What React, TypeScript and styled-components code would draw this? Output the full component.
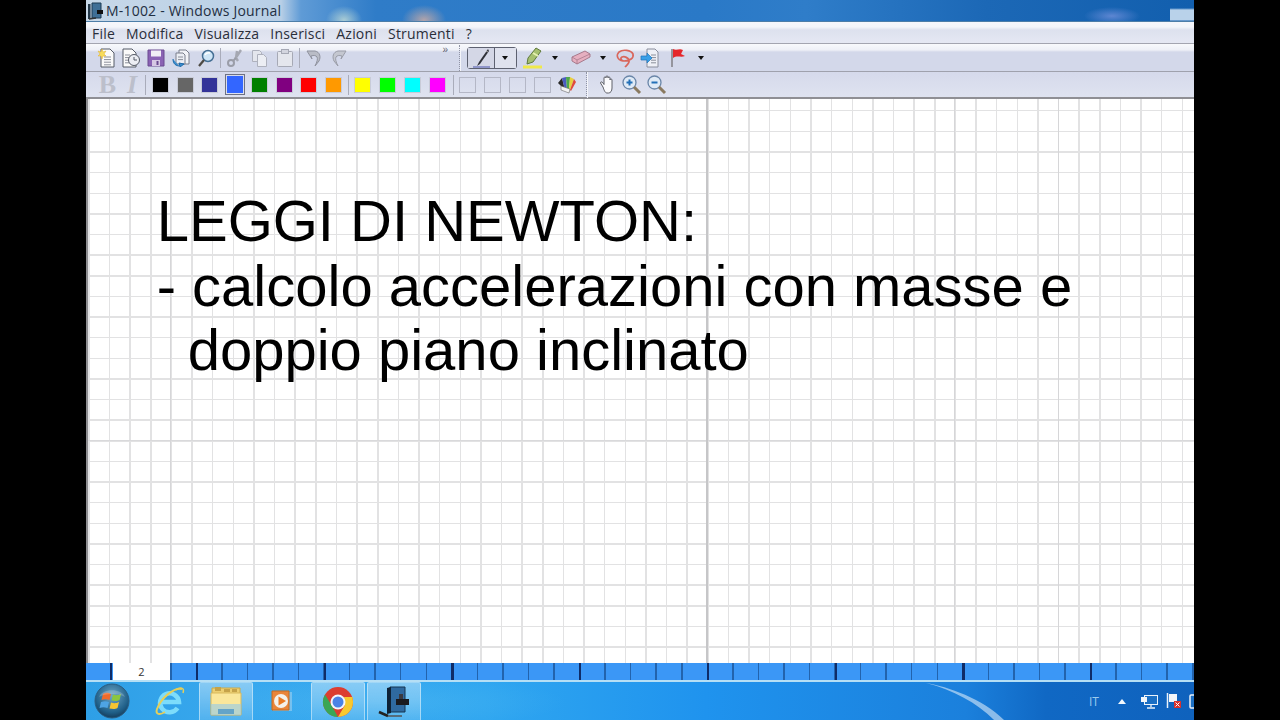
import React from "react";
import styled, { createGlobalStyle } from "styled-components";

const Global = createGlobalStyle`
  html, body { margin: 0; padding: 0; background: #000; width: 1280px; height: 720px; overflow: hidden; }
  #root { width: 1280px; height: 720px; }
`;

const Screen = styled.div`
  position: relative;
  width: 1108px;
  height: 720px;
  margin-left: 86px;
  display: flex;
  flex-direction: column;
  overflow: hidden;
  background: #fff;
  font-family: "Open Sans", "Noto Sans", sans-serif;
`;

const TitleBar = styled.div`
  height: 22px;
  flex: none;
  display: flex;
  align-items: center;
  padding-left: 2px;
  gap: 2px;
  box-sizing: border-box;
  border-bottom: 1px solid #4d7ea8;
  background:
    linear-gradient(#0000 0 8px, #b9d2ea 10px 20px, #0000 21px) 1084px 0 / 24px 22px no-repeat,
    radial-gradient(ellipse 28px 9px at 1026px 16px, #6f8fdacc, #6f8fda00),
    radial-gradient(ellipse 22px 15px at 338px 20px, #c6aaa6dd, #c6aaa600),
    radial-gradient(ellipse 18px 14px at 258px 20px, #c2dcd6cc, #c2dcd600),
    linear-gradient(90deg, #c7d8e8 0, #b8cfe6 195px, #5f9bd6 215px, #2f7cc8 290px, #2a79c7 620px, #2f7dc9 720px, #1c68b6 900px, #125fae 1108px);
`;

const TitleText = styled.span`
  font-size: 14px;
  color: #1f2f42;
  letter-spacing: 0.2px;
  white-space: nowrap;
`;

const MenuBar = styled.div`
  height: 22px;
  flex: none;
  box-sizing: border-box;
  display: flex;
  align-items: center;
  gap: 11px;
  padding: 2px 0 0 6px;
  border-bottom: 1px solid #a3a5b0;
  background: linear-gradient(#f6f7fb 0, #f3f5fa 5px, #dde1ee 8px, #e5e8f3 21px);
`;

const MenuItem = styled.span`
  font-size: 14px;
  letter-spacing: 0.2px;
  color: #2a2e3a;
  white-space: nowrap;
`;

const ToolRow = styled.div<{ $tall?: boolean }>`
  height: ${(p) => (p.$tall ? 28 : 27)}px;
  flex: none;
  box-sizing: border-box;
  display: flex;
  align-items: center;
  padding-left: ${(p) => (p.$tall ? 7.5 : 9)}px;
  border-bottom: ${(p) => (p.$tall ? "1px solid #9fa1ad" : "2px solid #8f8f94")};
  background: ${(p) =>
    p.$tall
      ? "linear-gradient(#f8f9fc 0, #eef0f7 6px, #d3d8ea 8px, #d3d8ea 27px)"
      : "linear-gradient(#d5d9eb, #dfe3f0)"};
`;

const Slot = styled.span<{ $w?: number; $ml?: number }>`
  flex: none;
  width: ${(p) => p.$w ?? 25}px;
  height: 22px;
  margin-left: ${(p) => p.$ml ?? 0}px;
  display: flex;
  align-items: center;
  justify-content: center;
`;

const FormatLetter = styled.span<{ $italic?: boolean }>`
  font-family: "Liberation Serif", "Times New Roman", serif;
  font-weight: 700;
  font-style: ${(p) => (p.$italic ? "italic" : "normal")};
  font-size: 26px;
  line-height: 22px;
  color: #bcbfcb;
`;

const Sep = styled.span<{ $dotted?: boolean; $ml?: number; $mr?: number }>`
  flex: none;
  width: 0;
  height: ${(p) => (p.$dotted ? 26 : 20)}px;
  margin-left: ${(p) => p.$ml ?? 1}px;
  margin-right: ${(p) => p.$mr ?? 2}px;
  border-left: 1px ${(p) => (p.$dotted ? "dotted #8f93a5" : "solid #a9acba")};
  ${(p) => (p.$dotted ? "box-shadow: 1px 0 0 #f4f5fa;" : "")}
`;

const Swatch = styled.span<{ $color?: string; $selected?: boolean }>`
  box-sizing: border-box;
  display: block;
  width: ${(p) => (p.$selected ? 20 : 17)}px;
  height: ${(p) => (p.$selected ? 21 : 16)}px;
  background: ${(p) => p.$color ?? "transparent"};
  background-clip: content-box;
  padding: ${(p) => (p.$selected ? 1 : 0)}px;
  border: 1px solid ${(p) => (p.$selected ? "#6d7183" : p.$color ? "#c8cbd8" : "#b4b7c6")};
`;

const PenButton = styled.span`
  flex: none;
  box-sizing: border-box;
  display: flex;
  width: 50px;
  height: 22px;
  margin-left: 7px;
  border: 1px solid #5d6170;
  border-radius: 3px;
  background: #d9dcea;
`;

const PenPart = styled.span<{ $caret?: boolean }>`
  display: flex;
  align-items: center;
  justify-content: center;
  width: ${(p) => (p.$caret ? 21 : 28)}px;
  background: ${(p) => (p.$caret ? "#dfe2ee" : "#d4d7e6")};
  ${(p) => (p.$caret ? "border-left: 1px solid #5d6170;" : "")}
`;

const Caret = styled.span<{ $ml?: number; $mr?: number }>`
  flex: none;
  width: 0;
  height: 0;
  margin-left: ${(p) => p.$ml ?? 0}px;
  margin-right: ${(p) => p.$mr ?? 0}px;
  border-left: 3.5px solid transparent;
  border-right: 3.5px solid transparent;
  border-top: 4px solid #111;
`;

const Chevrons = styled.span`
  flex: none;
  margin-left: 91px;
  margin-right: 3px;
  width: 10px;
  height: 22px;
  margin-top: -8px;
  font: 10px/14px "Liberation Sans", sans-serif;
  letter-spacing: -1px;
  color: #5c6070;
`;

const Canvas = styled.main`
  flex: 1;
  min-height: 0;
  box-sizing: border-box;
  padding: 90.35px 0 0 68.7px;
  border-left: 2px solid #8d8d90;
  background:
    linear-gradient(90deg, #0000 618.5px, #c6c6c8 618.5px 620px, #0000 620px),
    linear-gradient(90deg, #0000 82px, #d6d6d8 82px 83.5px, #0000 83.5px),
    linear-gradient(90deg, #0000 866px, #d6d6d8 866px 867.5px, #0000 867.5px),
    linear-gradient(90deg, #0000 970px, #d6d6d8 970px 971.5px, #0000 971.5px),
    linear-gradient(#0000 340.5px, #d9d9db 340.5px 342px, #0000 342px),
    repeating-linear-gradient(90deg, #0000 0 0.2px, #e2e2e3 0.2px 1.7px, #0000 1.7px 20.63px),
    repeating-linear-gradient(180deg, #0000 0 11px, #e2e2e3 11px 12.5px, #0000 12.5px 20.63px),
    #fff;
`;

const TextLine = styled.div<{ $indent?: number }>`
  font-family: "Liberation Sans", Arial, sans-serif;
  font-size: 58px;
  line-height: 64.5px;
  color: #000;
  white-space: pre;
  padding-left: ${(p) => p.$indent ?? 0}px;
`;

const TabBar = styled.div`
  height: 17px;
  flex: none;
  display: flex;
  background:
    repeating-linear-gradient(90deg, #0f2c68 0 2px, #0000 2px 127.75px) 110px 0,
    repeating-linear-gradient(90deg, #2263ad 0 1.5px, #0000 1.5px 25.55px) 84px 0,
    #3b97f6;
`;

const PageTab = styled.span`
  flex: none;
  width: 57px;
  margin-left: 27px;
  background: #fff;
  font: 11px/18px "Open Sans", sans-serif;
  color: #333;
  text-align: center;
`;

const Taskbar = styled.footer`
  position: relative;
  height: 40px;
  flex: none;
  box-sizing: border-box;
  display: flex;
  align-items: stretch;
  gap: 2px;
  padding-left: 7px;
  border-top: 2px solid #b5dff5;
  background:
    radial-gradient(ellipse 180px 26px at 300px 20px, #5cc0f255, #5cc0f200),
    linear-gradient(90deg, #2e9fe6 0, #38a8ee 150px, #2fa6f0 400px, #1f93ee 620px, #1b80dc 880px, #1068c4 960px, #0f62bd 1108px);
`;

const OrbSlot = styled.span`
  flex: none;
  width: 48px;
  display: flex;
  align-items: center;
  padding-left: 1px;
  box-sizing: border-box;
`;

const TaskSlot = styled.span<{ $open?: boolean }>`
  flex: none;
  width: 54px;
  box-sizing: border-box;
  display: flex;
  align-items: center;
  justify-content: center;
  ${(p) =>
    p.$open
      ? `border: 1px solid #d8eefb99; border-bottom: 0; border-radius: 2px 2px 0 0;
         background: linear-gradient(#ffffff66, #ffffff22);`
      : ""}
`;

const Tray = styled.div`
  margin-left: auto;
  display: flex;
  align-items: center;
  width: 105px;
  flex: none;
`;

const Lang = styled.span`
  font: 12px "Open Sans", sans-serif;
  color: #9ccbee;
  width: 29px;
  flex: none;
`;

const TrayArrow = styled.span`
  width: 0;
  height: 0;
  flex: none;
  margin-right: 14px;
  border-left: 4px solid transparent;
  border-right: 4px solid transparent;
  border-bottom: 5px solid #f2f8fd;
`;

const TrayIcon = styled.span<{ $mr?: number }>`
  display: flex;
  flex: none;
  margin-right: ${(p) => p.$mr ?? 8}px;
`;

const Swoosh = styled.svg`
  position: absolute;
  left: 838px;
  top: 0;
  pointer-events: none;
`;

const I = ({ s = 20, h, children }: { s?: number; h?: number; children: React.ReactNode }) => (
  <svg width={s} height={h ?? s} viewBox={`0 0 ${s} ${h ?? s}`} style={{ display: "block", flex: "none" }}>
    {children}
  </svg>
);

const Page = ({ x = 4, y = 1, w = 13, h = 18 }) => (
  <path d={`M${x} ${y}h${w - 4}l4 4v${h - 4}h-${w}z`} fill="#fafafa" stroke="#555a66" strokeWidth="1" />
);

const Lines = ({ x = 7, y = 7, n = 4, w = 7 }) => (
  <path d={Array.from({ length: n }, (_, k) => `M${x} ${y + k * 2.6}h${w}`).join("")} stroke="#8b8f9a" strokeWidth="1" />
);

const icons = {
  newDoc: (
    <I>
      <Page x={5} w={13} />
      <Lines x={8} y={9} n={4} w={7} />
      <path d="M6 1l1 3 3-1-2 3 2 2-3 0-1 3-1-3-3 0 2-2-2-3 3 1z" fill="#f7dc5a" stroke="#e0b030" strokeWidth=".5" />
    </I>
  ),
  template: (
    <I>
      <Page x={2} w={13} />
      <Lines x={4} y={7} n={4} w={5} />
      <circle cx="13" cy="12" r="5.5" fill="#eceef4" stroke="#555a66" />
      <path d="M13 9v3h3" fill="none" stroke="#555a66" />
    </I>
  ),
  save: (
    <I s={18}>
      <path d="M1 1h16v16H1z" fill="#8a62b4" stroke="#6a4a90" />
      <rect x="4" y="1.5" width="10" height="6" fill="#f1eef5" />
      <rect x="5" y="11" width="8" height="6" fill="#d6c8e4" />
      <rect x="9.5" y="12" width="2" height="4" fill="#6a4a90" />
    </I>
  ),
  send: (
    <I s={18}>
      <path d="M7 1h7l3 3v11H7z" fill="#f3f4f8" stroke="#7b7f8c" />
      <path d="M4 4h7l2 2v9H4z" fill="#eceef4" stroke="#7b7f8c" />
      <Lines x={6} y={8} n={2} w={5} />
      <path d="M1 10c0 5 3 7 7 7l-1-3 5 1-4 3" fill="#3c8ed0" stroke="#1f6aa8" strokeWidth="1" />
    </I>
  ),
  find: (
    <I s={18}>
      <circle cx="11" cy="7" r="5.5" fill="#cfe6f7" stroke="#456f94" strokeWidth="1.5" />
      <path d="M8 6c1-2 3-2.5 5-2" stroke="#fff" strokeWidth="1.5" fill="none" />
      <path d="M7 11l-5 6" stroke="#4e4a44" strokeWidth="2.2" />
    </I>
  ),
  cut: (
    <I s={18}>
      <path d="M15 1l-6 9M11 2l-1 7 2 3" stroke="#a5a8b2" strokeWidth="2.4" fill="none" />
      <circle cx="5" cy="14" r="3" fill="none" stroke="#9a9da8" strokeWidth="2" />
      <path d="M7 12l3-3" stroke="#9a9da8" strokeWidth="2" />
    </I>
  ),
  copy: (
    <I s={18}>
      <path d="M1.5 1.5h7l2 2v9h-9z" fill="#e4e6ed" stroke="#aeb1bd" />
      <path d="M6.5 5.5h6l3 3v9h-9z" fill="#eceef4" stroke="#aeb1bd" />
    </I>
  ),
  paste: (
    <I s={18}>
      <rect x="1.5" y="2.5" width="15" height="15" rx="1" fill="#e4e6ed" stroke="#a6a9b5" />
      <rect x="5.5" y=".5" width="7" height="4" fill="#d3d5df" stroke="#a6a9b5" />
    </I>
  ),
  undo: (
    <I s={18}>
      <path d="M2 2h8c5 1 6 6 4 10l-4 5c2-4 3-7 2-9-1-1.5-3-2-6-1l1 3z" fill="#b9bcc6" stroke="#8f929e" />
    </I>
  ),
  redo: (
    <I s={18}>
      <path d="M16 2H8C3 3 2 8 4 12l4 5C6 13 5 10 6 8c1-1.5 3-2 6-1l-1 3z" fill="#c4c7d0" stroke="#9a9da8" />
    </I>
  ),
  pen: (
    <I s={22}>
      <path d="M18 2l-9 13-2 4 3-2 9-13z" fill="#2f3138" />
      <path d="M16 4l2 1" stroke="#aaa" />
      <path d="M3 20h17" stroke="#8f95c9" strokeWidth="2" />
    </I>
  ),
  marker: (
    <I s={22}>
      <path d="M14 1l5 3-8 11-6 2 1-6z" fill="#a6c070" stroke="#5f7a3c" />
      <path d="M11 6l5 3" stroke="#e5f0b0" strokeWidth="2" />
      <path d="M1 20h19" stroke="#efe94a" strokeWidth="3" />
    </I>
  ),
  eraser: (
    <I s={20} h={18}>
      <path d="M1 8l13-6 5 3v3L6 15l-5-3z" fill="#e6afc0" stroke="#a77a8c" />
      <path d="M1 8l5 3 13-6M6 11v4" stroke="#a77a8c" fill="none" strokeWidth=".8" />
    </I>
  ),
  lasso: (
    <I s={20}>
      <path d="M8 13C2 12 1 7 4 4c4-3 12-2 14 2 1 4-3 7-9 7-3 0-4-3-2-4 3-1 6 1 7 3 1 3-2 5-4 7" fill="none" stroke="#d9675c" strokeWidth="1.7" />
    </I>
  ),
  insert: (
    <I s={20}>
      <path d="M7 1h8l3 3v15H7z" fill="#eef0f6" stroke="#8a8e9c" />
      <Lines x={11} y={7} n={4} w={5} />
      <path d="M1 8h6V5l5 5-5 5v-3H1z" fill="#3aa0e8" stroke="#1f74b8" strokeWidth=".7" />
    </I>
  ),
  flag: (
    <I s={18} h={22}>
      <path d="M3 2v18" stroke="#8a8a90" strokeWidth="1.7" />
      <path d="M4 2c4 2 6-1 10 1l-2 4 4 2c-4 2-8-1-12 2z" fill="#e5262a" />
    </I>
  ),
  palette: (
    <I s={20}>
      <path d="M1 8L5 3l3 12z" fill="#2a2a2a" />
      <path d="M5 3l4-1 1 13H8z" fill="#4a5cc0" />
      <path d="M9 2l4 0-1 13h-2z" fill="#4fa84a" />
      <path d="M13 2l4 2-4 11h-1z" fill="#e8d040" />
      <path d="M17 4l2 3-5 9-1-1z" fill="#e04a3a" />
      <path d="M4 11l9 3-1 4-8-3z" fill="#f4f4f4" stroke="#666" strokeWidth=".6" />
    </I>
  ),
  hand: (
    <I s={18} h={20}>
      <path d="M4 12L1.5 8c0-1.5 1.5-1.5 2.5 0l1 1.5V3c0-1.5 2-1.5 2 0V2c0-1.5 2-1.5 2 0v1c0-1.5 2-1.5 2 0v2c0-1.5 2-1.5 2 0v8c0 3-1.5 5-3.5 5H8c-2 0-3-3-4-6z" fill="#fbfbfd" stroke="#5e6068" strokeWidth="1" />
    </I>
  ),
  zoomIn: (
    <I s={20}>
      <circle cx="7.5" cy="7.5" r="6.5" fill="#dfeaf6" stroke="#6a86a8" strokeWidth="1.3" />
      <path d="M4.5 7.5h6M7.5 4.5v6" stroke="#2370b8" strokeWidth="2" />
      <path d="M12 12l6 6" stroke="#8a7a60" strokeWidth="3" />
    </I>
  ),
  zoomOut: (
    <I s={20}>
      <circle cx="7.5" cy="7.5" r="6.5" fill="#dfeaf6" stroke="#6a86a8" strokeWidth="1.3" />
      <path d="M4.5 7.5h6" stroke="#2370b8" strokeWidth="2" />
      <path d="M12 12l6 6" stroke="#8a7a60" strokeWidth="3" />
    </I>
  ),
  journalSmall: (
    <I s={16} h={18}>
      <path d="M4 1h9v15H4z" fill="#3f6f96" stroke="#1c3a52" />
      <path d="M1 2v15" stroke="#24394a" strokeWidth="3" />
      <path d="M9 8h6v4H9z" fill="#111" />
      <path d="M1 17l7-1" stroke="#333" strokeWidth="1.5" />
    </I>
  ),
  orb: (
    <I s={36}>
      <defs>
        <radialGradient id="orbFill" cx=".5" cy=".35" r=".7">
          <stop offset="0" stopColor="#6fa8c8" />
          <stop offset=".7" stopColor="#1f5f88" />
          <stop offset="1" stopColor="#12324e" />
        </radialGradient>
      </defs>
      <circle cx="18" cy="18" r="17" fill="url(#orbFill)" stroke="#2c5d80" />
      <path d="M9 11c3-2 6-1 8 0l-1.5 6c-3-1-5-1-8 0z" fill="#ef6a2a" />
      <path d="M19 11.500c3 1 5 1 8-.5l-1.5 6c-3 1.5-5 1-8 .5z" fill="#8cc63e" />
      <path d="M7 19c3-1 5-1 8 0l-1.5 6c-3-1-5-1-8 0z" fill="#4ea4e4" />
      <path d="M17 19.500c3 1 5 1 8-.5l-1.5 6c-3 1.5-5 1-8 .5z" fill="#f6c532" />
      <path d="M5 14C8 5 28 5 31 14 25 10 11 10 5 14z" fill="#ffffff33" />
    </I>
  ),
  ie: (
    <I s={34}>
      <path d="M8 18h18A9.500 9.500 0 1 0 24.500 24" fill="none" stroke="#7ddcfb" strokeWidth="4.5" />
      <path d="M29 5C21 3 8 14 4 25c-2 6 3 6 8 3" fill="none" stroke="#e6cf5a" strokeWidth="2" />
      <path d="M23 6c4-3 9-3 7 3" fill="none" stroke="#e6cf5a" strokeWidth="1.5" />
    </I>
  ),
  folder: (
    <I s={34} h={32}>
      <path d="M3 2h28v14H3z" fill="#eccf72" stroke="#c9a848" />
      <path d="M6 1h6v4H6zM15 3h6v3h-6zM23 3h5v3h-5z" fill="#c5a34a" />
      <path d="M2 7h30v22H2z" fill="#fae79b" stroke="#d9b95c" />
      <path d="M2 18h30v11H2z" fill="#9fcde0" opacity=".7" />
      <path d="M9 23h16v5H9z" fill="#64a4c8" />
    </I>
  ),
  media: (
    <I s={24}>
      <path d="M3 3h19v19H3z" fill="#8fcaf0" opacity=".7" />
      <path d="M2 2h17v19H2z" fill="#e8853a" stroke="#c46a20" />
      <circle cx="11" cy="12" r="7" fill="#f4f1ea" />
      <path d="M8.500 7.500l7.500 4.500-7.500 4.500z" fill="#ea7a22" />
    </I>
  ),
  chrome: (
    <I s={32}>
      <circle cx="16" cy="16" r="15" fill="#dc3d30" />
      <path d="M3 23.500A15 15 0 0 1 3.050 8.400L10 20l6 11A15 15 0 0 1 3 23.500z" fill="#3aa655" />
      <path d="M31 16a15 15 0 0 1-15 15l7-12-1-8h8.500z" fill="#f8c92f" />
      <circle cx="16" cy="16" r="7.5" fill="#f4f6fa" />
      <circle cx="16" cy="16" r="5.5" fill="#4b82e6" />
    </I>
  ),
  journal: (
    <I s={34} h={34}>
      <path d="M13 2h15v25H13z" fill="#2f6aa0" stroke="#143450" />
      <path d="M10 3l4-1v26l-4 1z" fill="#0e2236" />
      <path d="M19 14h13v6H19z" fill="#1a1a1e" />
      <path d="M22 9h4v5h-4z" fill="#3a3a40" />
      <path d="M11 31l-9-4" stroke="#222" strokeWidth="2.5" />
      <path d="M11 31h14" stroke="#555" strokeWidth="1.5" />
    </I>
  ),
  monitor: (
    <I s={18} h={16}>
      <rect x="4.5" y="2.5" width="13" height="9" fill="#1b6fc4" stroke="#eaf2fa" />
      <path d="M11 12v2M7 15h8" stroke="#eaf2fa" strokeWidth="1.3" />
      <path d="M1 4h6v5H1z" fill="#f2f6fa" />
    </I>
  ),
  trayFlag: (
    <I s={16} h={18}>
      <path d="M1.500 1v15" stroke="#eaf2fa" strokeWidth="1.5" />
      <path d="M3 2h8v8H3z" fill="#f2f6fa" />
      <rect x="8" y="9" width="7" height="7" fill="#d8322e" />
      <path d="M9.500 10.500l4 4m0-4l-4 4" stroke="#fff" />
    </I>
  ),
  battery: (
    <I s={10} h={16}>
      <rect x="1" y="2" width="9" height="13" rx="1" fill="#1b6fc4" stroke="#eaf2fa" strokeWidth="1.5" />
    </I>
  ),
};

const row2a = ["#000000", "#666666", "#333399", "#3366ff", "#008000", "#800080", "#ff0000", "#ff9900"];
const row2b = ["#ffff00", "#00ff00", "#00ffff", "#ff00ff"];

const menus = ["File", "Modifica", "Visualizza", "Inserisci", "Azioni", "Strumenti", "?"];

export default function App() {
  return (
    <>
      <Global />
      <Screen>
        <TitleBar>
          {icons.journalSmall}
          <TitleText>M-1002 - Windows Journal</TitleText>
        </TitleBar>
        <MenuBar>
          {menus.map((m) => (
            <MenuItem key={m}>{m}</MenuItem>
          ))}
        </MenuBar>
        <ToolRow $tall>
          <Slot>{icons.newDoc}</Slot>
          <Slot>{icons.template}</Slot>
          <Slot>{icons.save}</Slot>
          <Slot>{icons.send}</Slot>
          <Slot>{icons.find}</Slot>
          <Sep />
          <Slot>{icons.cut}</Slot>
          <Slot>{icons.copy}</Slot>
          <Slot>{icons.paste}</Slot>
          <Sep />
          <Slot>{icons.undo}</Slot>
          <Slot>{icons.redo}</Slot>
          <Chevrons>»</Chevrons>
          <Sep $dotted $ml={3} $mr={0} />
          <PenButton>
            <PenPart>{icons.pen}</PenPart>
            <PenPart $caret>
              <Caret />
            </PenPart>
          </PenButton>
          <Slot $w={26} $ml={3}>{icons.marker}</Slot>
          <Caret $ml={6.5} $mr={11.5} />
          <Slot $w={22}>{icons.eraser}</Slot>
          <Caret $ml={8.5} $mr={7} />
          <Slot $w={24}>{icons.lasso}</Slot>
          <Slot $w={24} $ml={1}>{icons.insert}</Slot>
          <Slot $w={24} $ml={4}>{icons.flag}</Slot>
          <Caret $ml={8} />
        </ToolRow>
        <ToolRow>
          <Slot>
            <FormatLetter>B</FormatLetter>
          </Slot>
          <Slot $w={24}>
            <FormatLetter $italic>I</FormatLetter>
          </Slot>
          <Sep $ml={1} $mr={2} />
          {row2a.map((c) => (
            <Slot key={c} $w={24.75}>
              <Swatch $color={c} $selected={c === "#3366ff"} />
            </Slot>
          ))}
          <Sep $ml={2} $mr={1.5} />
          {row2b.map((c) => (
            <Slot key={c} $w={24.75}>
              <Swatch $color={c} />
            </Slot>
          ))}
          <Sep $ml={3} $mr={2} />
          {[0, 1, 2, 3].map((k) => (
            <Slot key={k} $w={24.75}>
              <Swatch />
            </Slot>
          ))}
          <Slot $w={24.75}>{icons.palette}</Slot>
          <Sep $dotted $ml={7} $mr={0} />
          <Slot $w={24.75} $ml={8}>{icons.hand}</Slot>
          <Slot $w={24.75}>{icons.zoomIn}</Slot>
          <Slot $w={24.75}>{icons.zoomOut}</Slot>
        </ToolRow>
        <Canvas>
          <TextLine>LEGGI DI NEWTON:</TextLine>
          <TextLine>{"- calcolo accelerazioni con masse e"}</TextLine>
          <TextLine $indent={31}>doppio piano inclinato</TextLine>
        </Canvas>
        <TabBar>
          <PageTab>2</PageTab>
        </TabBar>
        <Taskbar>
          <OrbSlot>{icons.orb}</OrbSlot>
          <TaskSlot>{icons.ie}</TaskSlot>
          <TaskSlot $open>{icons.folder}</TaskSlot>
          <TaskSlot>{icons.media}</TaskSlot>
          <TaskSlot $open>{icons.chrome}</TaskSlot>
          <TaskSlot $open>{icons.journal}</TaskSlot>
          <Tray>
            <Lang>IT</Lang>
            <TrayArrow />
            <TrayIcon>{icons.monitor}</TrayIcon>
            <TrayIcon $mr={7}>{icons.trayFlag}</TrayIcon>
            <TrayIcon $mr={0}>{icons.battery}</TrayIcon>
          </Tray>
          <Swoosh width="90" height="40" viewBox="0 0 90 40">
            <path d="M2 1C25 5 60 17 82 40L72 40C55 22 30 8 2 1z" fill="#ffffff" opacity=".5" />
          </Swoosh>
        </Taskbar>
      </Screen>
    </>
  );
}
